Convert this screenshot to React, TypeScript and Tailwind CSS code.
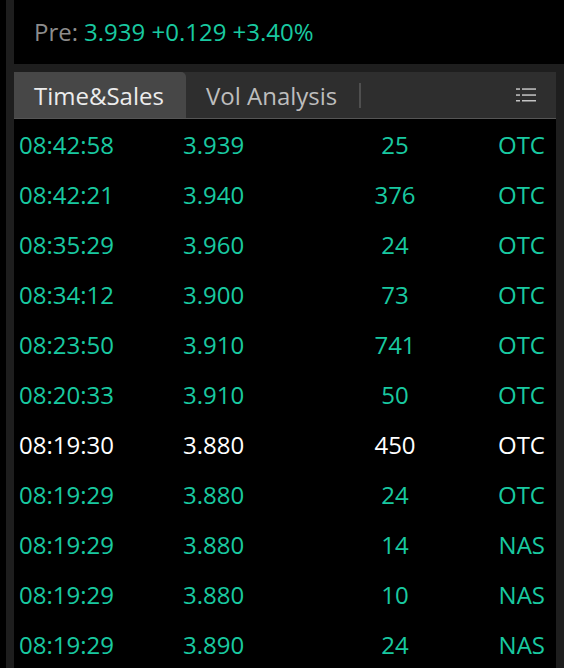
import React from "react";

const rows = [
  ["08:42:58", "3.939", "25", "OTC", false],
  ["08:42:21", "3.940", "376", "OTC", false],
  ["08:35:29", "3.960", "24", "OTC", false],
  ["08:34:12", "3.900", "73", "OTC", false],
  ["08:23:50", "3.910", "741", "OTC", false],
  ["08:20:33", "3.910", "50", "OTC", false],
  ["08:19:30", "3.880", "450", "OTC", true],
  ["08:19:29", "3.880", "24", "OTC", false],
  ["08:19:29", "3.880", "14", "NAS", false],
  ["08:19:29", "3.880", "10", "NAS", false],
  ["08:19:29", "3.890", "24", "NAS", false],
] as const;

function ListIcon() {
  return (
    <svg width="20" height="14" viewBox="0 0 20 14" fill="#c4c4c4">
      <rect x="0" y="0.3" width="4" height="1.5" />
      <rect x="6" y="0.3" width="14" height="1.5" />
      <rect x="0" y="6.3" width="4" height="1.5" />
      <rect x="6" y="6.3" width="14" height="1.5" />
      <rect x="0" y="12" width="4" height="1.5" />
      <rect x="6" y="12" width="14" height="1.5" />
    </svg>
  );
}

export default function App() {
  return (
    <div
      className="w-[564px] h-[668px] bg-black flex overflow-hidden"
      style={{ fontFamily: '"Open Sans", "Noto Sans", sans-serif' }}
    >
      <div className="w-[6px] shrink-0 bg-black" />
      <div className="w-[8px] shrink-0 bg-[#1e1e1e]" />
      <div className="flex-1 flex flex-col min-w-0">
        <div className="h-[64px] shrink-0 flex items-center pl-[20px] text-[24px] leading-none">
          <span className="text-[#8c8c8c]">Pre:</span>
          <span className="text-[#19c9a0] ml-[6px]">3.939 +0.129 +3.40%</span>
        </div>
        <div className="h-[8px] shrink-0 bg-[#1e1e1e]" />
        <div className="flex-1 flex min-h-0">
          <div className="flex-1 flex flex-col min-w-0 overflow-hidden">
            <div className="h-[47px] shrink-0 bg-[#2e2e2e] border-b border-[#555555] flex items-stretch">
              <div className="w-[172px] bg-[#474747] rounded-tr-[5px] flex items-center pl-[20px] pt-[1px] text-[24px] text-[#ececec] leading-none">
                Time&amp;Sales
              </div>
              <div className="pl-[20px] pt-[1px] flex items-center text-[24px] text-[#bdbdbd] leading-none">
                Vol Analysis
              </div>
              <div className="ml-[22px] self-center w-[2px] h-[25px] bg-[#4f4f4f]" />
              <div className="flex-1" />
              <div className="flex items-center pr-[20px]">
                <ListIcon />
              </div>
            </div>
            <div className="flex flex-col shrink-0 pt-[1px]">
              {rows.map((r, i) => (
                <div
                  key={i}
                  className={`h-[50px] shrink-0 flex items-center text-[24px] leading-none ${
                    r[4] ? "text-white" : "text-[#19c9a0]"
                  }`}
                >
                  <div className="w-[169px] pl-[5px]">{r[0]}</div>
                  <div className="w-[150px]">{r[1]}</div>
                  <div className="w-[124px] text-center">{r[2]}</div>
                  <div className="flex-1 text-right pr-[11px]">{r[3]}</div>
                </div>
              ))}
            </div>
          </div>
          <div className="w-[8px] shrink-0 bg-[#1e1e1e]" />
        </div>
      </div>
    </div>
  );
}
